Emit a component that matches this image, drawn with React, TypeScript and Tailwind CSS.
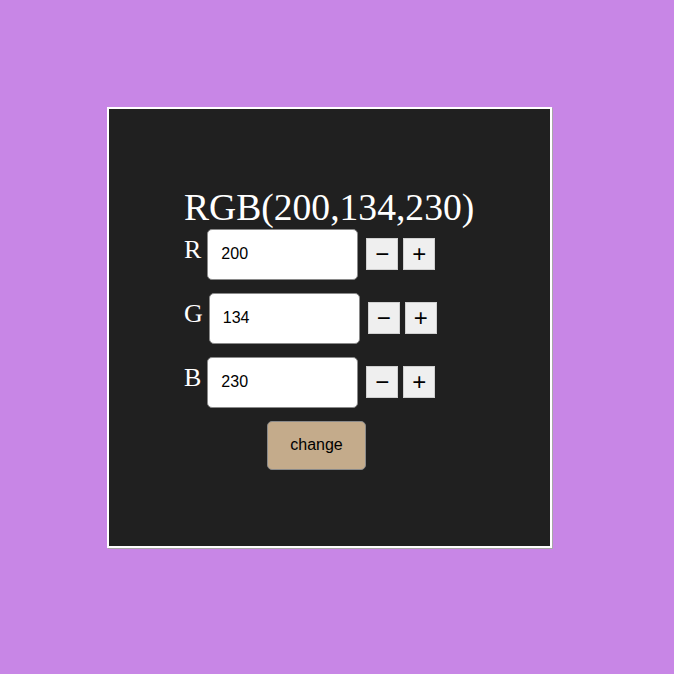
import React, { useState } from 'react';

const serif = { fontFamily: '"Liberation Serif", "Times New Roman", serif' };

const Channel = ({
    label,
    value,
    onChange,
}: {
    label: string;
    value: number;
    onChange: (v: number) => void;
}) => {
    return (
        <div className="flex items-center">
            <span className="text-[26px] leading-none text-white mb-[8px] mr-[6px] font-['Liberation_Serif',serif]">{label}</span>
            <input
                value={value}
                onChange={(e) => onChange(Number(e.target.value) || 0)}
                className="w-[151px] h-[51px] bg-white rounded-[5px] border border-[#8a8a8a] pl-[13px] text-[16px] text-black font-['Liberation_Sans',Arial,sans-serif] outline-none"
            />
            {/* minus / plus */}
            <button
                onClick={() => onChange(Math.max(0, value - 1))}
                className="ml-[8px] w-[32px] h-[32px] bg-[#efefef] border border-[#d0d0d0] text-[24px] leading-none text-black flex items-center justify-center font-['Liberation_Sans',Arial,sans-serif]"
            >
                −
            </button>
            <button
                onClick={() => onChange(Math.min(255, value + 1))}
                className="ml-[5px] w-[32px] h-[32px] bg-[#efefef] border border-[#d0d0d0] text-[24px] leading-none text-black flex items-center justify-center font-['Liberation_Sans',Arial,sans-serif]"
            >
                +
            </button>
        </div>
    );
};

export default function App() {
    const [r, setR] = useState(200);
    const [g, setG] = useState(134);
    const [b, setB] = useState(230);

    return (
        <div className="w-[674px] h-[674px] bg-[#c886e6] pt-[107px] pl-[107px]">
            <div className="w-[445px] h-[441px] border-2 border-white bg-[#202020] shadow-[1px_1px_0_#a8a8a8] pt-[80px] pl-[75px] flex flex-col items-start">
                <h1 className="text-[37.6px] leading-none text-white" style={serif}>
                    RGB({r},{g},{b})
                </h1>
                <div className="mt-[2px] flex flex-col gap-[13px]">
                    <Channel label="R" value={r} onChange={setR} />
                    <Channel label="G" value={g} onChange={setG} />
                    <Channel label="B" value={b} onChange={setB} />
                </div>
                <button className="mt-[13px] ml-[83px] w-[99px] h-[49px] bg-[#c4ab8b] border border-[#8a8a8a] rounded-[5px] text-[16px] text-black font-['Liberation_Sans',Arial,sans-serif]">
                    change
                </button>
            </div>
        </div>
    );
}
